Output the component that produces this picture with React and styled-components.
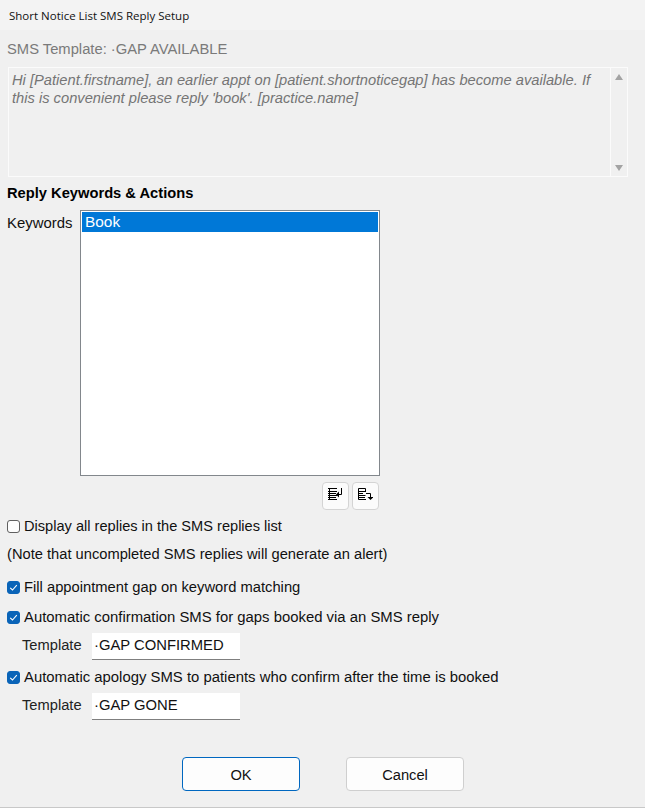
import React from "react";
import styled, { createGlobalStyle } from "styled-components";

const Global = createGlobalStyle`
  html, body { margin: 0; padding: 0; background: #f0f0f0; }
  body { font-family: "Liberation Sans", Arial, sans-serif; font-size: 14.7px; color: #000; }
`;

const Dialog = styled.div`
  width: 645px;
  height: 808px;
  box-sizing: border-box;
  display: flex;
  flex-direction: column;
  background: #f0f0f0;
  border-bottom: 1px solid #c8c8c8;
  overflow: hidden;
`;

const TitleBar = styled.div`
  height: 30px;
  flex: none;
  box-sizing: border-box;
  padding-left: 9px;
  display: flex;
  align-items: center;
  background: #f3f3f3;
  font-family: "Open Sans", sans-serif;
  font-size: 11.5px;
  color: #111;
`;

const Body = styled.div`
  flex: 1;
  display: flex;
  flex-direction: column;
  padding: 0 0 0 7px;
`;

const TemplateHeading = styled.div`
  height: 20px;
  margin-top: 9px;
  line-height: 20px;
  font-size: 14.75px;
  color: #7a7a7a;
`;

const MessageBox = styled.div`
  width: 620px;
  height: 110px;
  margin-top: 8px;
  margin-left: 1px;
  box-sizing: border-box;
  border: 1px solid #fbfbfb;
  display: flex;
`;

const MessageText = styled.div`
  flex: 1;
  padding: 3px 12px 0 3px;
  font-style: italic;
  font-size: 14.7px;
  line-height: 18px;
  color: #757575;
`;

const ScrollTrack = styled.div`
  width: 17px;
  flex: none;
  box-sizing: border-box;
  border-left: 1px solid #fbfbfb;
  display: flex;
  flex-direction: column;
  justify-content: space-between;
  align-items: center;
  padding: 6px 0 5px;
`;

const Arrow = styled.div`
  width: 0;
  height: 0;
  border-left: 4px solid transparent;
  border-right: 4px solid transparent;
  ${(p) => (p.$down ? "border-top: 6px solid #a3a3a3;" : "border-bottom: 6px solid #a3a3a3;")}
`;

const SectionTitle = styled.div`
  margin-top: 7px;
  height: 18px;
  line-height: 18px;
  font-weight: bold;
  color: #000;
`;

const KeywordRow = styled.div`
  margin-top: 8px;
  display: flex;
  gap: 7px;
`;

const KeywordLabel = styled.div`
  width: 66px;
  padding-top: 4px;
  line-height: 18px;
  font-size: 14.9px;
  color: #111;
`;

const ListBox = styled.div`
  width: 300px;
  height: 266px;
  box-sizing: border-box;
  border: 1px solid #82878c;
  background: #fff;
  padding: 1px;
`;

const ListItem = styled.div`
  height: 20px;
  line-height: 20px;
  padding-left: 3px;
  font-size: 15.4px;
  background: ${(p) => (p.$selected ? "#0078d7" : "transparent")};
  color: ${(p) => (p.$selected ? "#fff" : "#000")};
`;

const IconRow = styled.div`
  margin-top: 6px;
  margin-left: 315px;
  display: flex;
  gap: 3px;
`;

const IconButton = styled.button`
  width: 27px;
  height: 28px;
  padding: 0;
  box-sizing: border-box;
  border: 1px solid #d4d4d4;
  border-radius: 4px;
  background: #fbfbfb;
  display: flex;
  align-items: center;
  justify-content: center;
`;

const CheckRow = styled.label`
  display: flex;
  align-items: center;
  gap: 4px;
  height: 20px;
  margin-top: ${(p) => p.$top}px;
  font-size: ${(p) => p.$size || 14.7}px;
  color: #111;
`;

const Box = styled.span`
  width: 13px;
  height: 13px;
  flex: none;
  box-sizing: border-box;
  border-radius: 3px;
  display: flex;
  align-items: center;
  justify-content: center;
  background: ${(p) => (p.$on ? "#0a64b8" : "#fcfcfc")};
  border: 1px solid ${(p) => (p.$on ? "#0a64b8" : "#5f5f5f")};
`;

const Note = styled.div`
  height: 20px;
  line-height: 20px;
  margin-top: 8px;
  color: #111;
`;

const TemplateRow = styled.div`
  display: flex;
  align-items: center;
  height: 27px;
  margin-top: 6px;
  padding-left: 15px;
`;

const TemplateLabel = styled.span`
  width: 70px;
  padding-bottom: 3px;
  color: #222;
`;

const TemplateInput = styled.div`
  width: 148px;
  height: 27px;
  line-height: 25px;
  box-sizing: border-box;
  padding-left: 2px;
  font-size: 14.8px;
  background: #fff;
  border-bottom: 1px solid #7f7f7f;
  color: #111;
`;

const Footer = styled.div`
  margin-top: 37px;
  margin-left: 175px;
  display: flex;
  gap: 46px;
`;

const DialogButton = styled.button`
  width: 118px;
  height: 34px;
  box-sizing: border-box;
  border-radius: 4px;
  background: #fdfdfd;
  border: 1px solid ${(p) => (p.$primary ? "#0067c0" : "#cfcfcf")};
  font-family: inherit;
  font-size: 14.7px;
  color: #111;
  padding: 1px 0 0;
`;

const Check = () => (
  <svg width="9" height="9" viewBox="0 0 9 9" fill="none">
    <path d="M1.2 4.8 L3.5 7 L7.8 2.2" stroke="#fff" strokeWidth="1.1" />
  </svg>
);

const InsertIcon = () => (
  <svg width="15" height="16" viewBox="0 0 15 16" fill="none" stroke="#000" strokeWidth="1">
    <path d="M0 .5H9M1.5 .5V11.5M0 3.5H9M0 5.5H8M0 7.5H9M0 9.5H8M0 11.5H9" />
    <path d="M13.5 0V6.5H10" />
    <path d="M8 6.5L11 3.5V9.5Z" fill="#000" stroke="none" />
  </svg>
);

const AppendIcon = () => (
  <svg width="15" height="16" viewBox="0 0 15 16" fill="none" stroke="#000" strokeWidth="1">
    <path d="M.5 .5H7.5V4M.5 .5V11.5H8M.5 3.5H7.5M.5 5.5H5M.5 7.5H7.5M.5 9.5H7" />
    <path d="M8 5.5H12.5V9" />
    <path d="M9.5 9H15.5L12.5 12Z" fill="#000" stroke="none" />
  </svg>
);

const CheckItem = ({ on, top, size, children }) => (
  <CheckRow $top={top} $size={size}>
    <Box $on={on}>{on && <Check />}</Box>
    <span>{children}</span>
  </CheckRow>
);

const TemplateField = ({ value }) => (
  <TemplateRow>
    <TemplateLabel>Template</TemplateLabel>
    <TemplateInput>{value}</TemplateInput>
  </TemplateRow>
);

export default function App() {
  return (
    <>
      <Global />
      <Dialog>
        <TitleBar>Short Notice List SMS Reply Setup</TitleBar>
        <Body>
          <TemplateHeading>SMS Template: ·GAP AVAILABLE</TemplateHeading>
          <MessageBox>
            <MessageText>
              Hi [Patient.firstname], an earlier appt on [patient.shortnoticegap] has become available. If this is
              convenient please reply 'book'. [practice.name]
            </MessageText>
            <ScrollTrack>
              <Arrow />
              <Arrow $down />
            </ScrollTrack>
          </MessageBox>
          <SectionTitle>Reply Keywords &amp; Actions</SectionTitle>
          <KeywordRow>
            <KeywordLabel>Keywords</KeywordLabel>
            <ListBox>
              <ListItem $selected>Book</ListItem>
            </ListBox>
          </KeywordRow>
          <IconRow>
            <IconButton>
              <InsertIcon />
            </IconButton>
            <IconButton>
              <AppendIcon />
            </IconButton>
          </IconRow>
          <CheckItem top={6} size={14.6}>Display all replies in the SMS replies list</CheckItem>
          <Note>(Note that uncompleted SMS replies will generate an alert)</Note>
          <CheckItem on top={13} size={14.75}>Fill appointment gap on keyword matching</CheckItem>
          <CheckItem on top={10} size={14.88}>Automatic confirmation SMS for gaps booked via an SMS reply</CheckItem>
          <TemplateField value="·GAP CONFIRMED" />
          <CheckItem on top={7} size={14.88}>Automatic apology SMS to patients who confirm after the time is booked</CheckItem>
          <TemplateField value="·GAP GONE" />
          <Footer>
            <DialogButton $primary>OK</DialogButton>
            <DialogButton>Cancel</DialogButton>
          </Footer>
        </Body>
      </Dialog>
    </>
  );
}
